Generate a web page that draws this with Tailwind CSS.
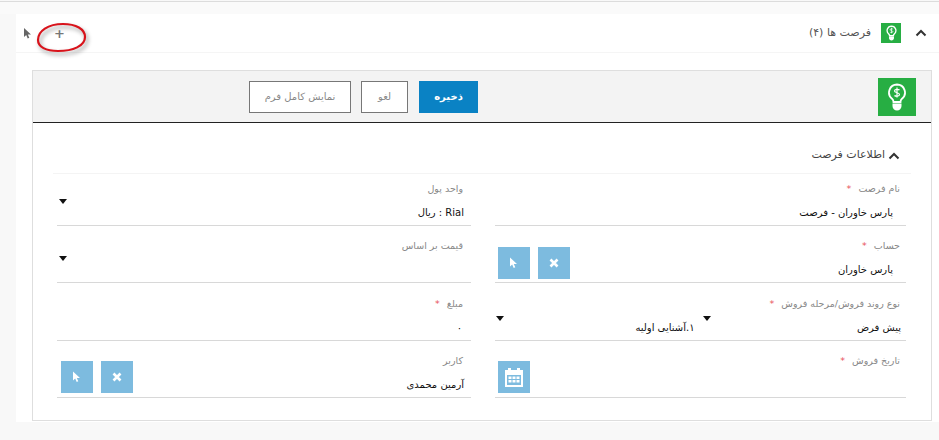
<!DOCTYPE html>
<html lang="fa" dir="rtl">
<head>
    <meta charset="UTF-8">
    <title>فرصت ها</title>
    <script src="https://cdn.jsdelivr.net/npm/@tailwindcss/browser@4"></script>
</head>
<body class="relative h-[440px] w-[939px] overflow-hidden bg-[#f8f8f8] font-['DejaVu_Sans',sans-serif]">

    <!-- top strip -->
    <div class="mt-px h-[13px] border-t border-[#dcdcdc] bg-[#fafafa]"></div>

    <div class="ml-[16px] h-[408px] bg-white">

        <!-- section header -->
        <div class="flex h-[39px] items-center justify-between border-b border-[#f5f5f5] pr-[12px] pl-[8px]">
            <div class="flex items-center">
                <svg class="ml-[14px] h-[10px] w-[12px]" viewBox="0 0 12 10"><path d="M1.500 7.500 6 3l4.500 4.500" fill="none" stroke="#333" stroke-width="2"/></svg>
                <span class="flex h-[20px] w-[20px] items-center justify-center bg-[#27ae43]">
                    <svg class="h-[16px] w-[11px]" viewBox="0 0 20 28"><path d="M10 1.500a8 8 0 0 0-5 14.200c1 1 1.500 2 1.500 3.300h7c0-1.300.5-2.300 1.500-3.300A8 8 0 0 0 10 1.500Z" fill="none" stroke="#fff" stroke-width="2.400"/><path d="M5.500 20.500h9V23c0 2.500-2 4.500-4.500 4.500S5.500 25.500 5.500 23Z" fill="#fff"/><path d="M12.500 7c-1-1-5-1-5 1s5 1.500 5 3.500-4 2-5 1M10 4.500v10" fill="none" stroke="#fff" stroke-width="1.300"/></svg>
                </span>
                <span class="mr-[10px] text-[11px] text-[#555]">فرصت ها (۴)</span>
            </div>
            <div class="flex items-center gap-[22px]">
                <span class="text-[13px] leading-none font-bold text-[#777]">+</span>
                <svg class="h-[11px] w-[8px]" viewBox="0 0 8 11"><path d="M0 0v9l2.200-2 1.500 3.500 1.600-.7-1.500-3.300H7Z" fill="#666"/></svg>
            </div>
        </div>

        <!-- form card -->
        <div class="mt-[17px] mr-[7px] ml-[16px] h-[351px] border border-[#dedede]">

            <!-- toolbar -->
            <div class="flex h-[52px] items-center border-b border-[#222] bg-[#f3f3f3] pr-[15px]">
                <span class="flex h-[38px] w-[38px] items-center justify-center bg-[#27ae43]">
                    <svg class="h-[28px] w-[20px]" viewBox="0 0 20 28"><path d="M10 1.500a8 8 0 0 0-5 14.200c1 1 1.500 2 1.500 3.300h7c0-1.300.5-2.300 1.500-3.300A8 8 0 0 0 10 1.500Z" fill="none" stroke="#fff" stroke-width="1.800"/><path d="M5.500 20.500h9V23c0 2.500-2 4.500-4.500 4.500S5.500 25.500 5.500 23Z" fill="#fff"/><path d="M12.500 7c-1-1-5-1-5 1s5 1.500 5 3.500-4 2-5 1M10 4.500v10" fill="none" stroke="#fff" stroke-width="1.200"/></svg>
                </span>
                <div class="mr-[400px] flex items-center gap-[10px]">
                    <button class="ml-px h-[32px] w-[59px] bg-[#0a82c4] text-[10px] font-bold text-white">ذخیره</button>
                    <button class="h-[32px] w-[47px] border border-[#777] bg-white text-[10px] text-[#888]">لغو</button>
                    <button class="h-[32px] w-[102px] border border-[#777] bg-white text-[10px] text-[#888]">نمایش کامل فرم</button>
                </div>
            </div>

            <!-- group title -->
            <div class="mx-[20px] flex h-[51px] items-center border-b border-[#f4f4f4] pt-[15px] pr-[11px]">
                <svg class="ml-[3px] h-[10px] w-[12px]" viewBox="0 0 12 10"><path d="M1.500 7.500 6 3l4.500 4.500" fill="none" stroke="#333" stroke-width="2"/></svg>
                <span class="text-[11px] text-[#444]">اطلاعات فرصت</span>
            </div>

            <!-- fields -->
            <div class="grid grid-cols-[411px_414px] grid-rows-[52px_57px_58px_57px] gap-x-[24px] pr-[25px]">

                <div class="flex flex-col justify-end border-b border-[#d8d8d8]">
                    <div class="pr-[6px] text-[9.500px] leading-[14px] text-[#888]">نام فرصت <span class="mr-[4px] text-[#e8505b]">*</span></div>
                    <div class="mt-[9px] mb-[4px] pr-[13px] text-[10px] leading-[16px] text-[#111]">پارس خاوران - فرصت</div>
                </div>

                <div class="flex items-end justify-between border-b border-[#d8d8d8]">
                    <div>
                        <div class="pr-[8px] text-[9.500px] leading-[14px] text-[#888]">واحد پول</div>
                        <div class="mt-[9px] mb-[4px] pr-[7px] text-[10px] leading-[16px] text-[#111]">Rial : ریال</div>
                    </div>
                    <svg class="mb-[21px] ml-[2px] h-[5px] w-[8px]" viewBox="0 0 8 5"><path d="M0 0h8L4 5Z" fill="#111"/></svg>
                </div>

                <div class="flex items-end justify-between border-b border-[#d8d8d8]">
                    <div>
                        <div class="pr-[6px] text-[9.500px] leading-[14px] text-[#888]">حساب <span class="mr-[4px] text-[#e8505b]">*</span></div>
                        <div class="mt-[9px] mb-[4px] pr-[13px] text-[10px] leading-[16px] text-[#111]">پارس خاوران</div>
                    </div>
                    <div class="mb-[3px] ml-[3px] flex gap-[8px]">
                        <span class="flex h-[32px] w-[32px] items-center justify-center bg-[#7dbbdf]">
                            <svg class="h-[10px] w-[10px]" viewBox="0 0 10 10"><path d="M1.500 1.500 8.500 8.500M8.500 1.500 1.500 8.500" stroke="#fff" stroke-width="2.600"/></svg>
                        </span>
                        <span class="flex h-[32px] w-[32px] items-center justify-center bg-[#7dbbdf]">
                            <svg class="h-[12px] w-[8px]" viewBox="0 0 8 11"><path d="M0 0v9l2.200-2 1.500 3.500 1.600-.7-1.500-3.300H7Z" fill="#fff"/></svg>
                        </span>
                    </div>
                </div>

                <div class="flex items-end justify-between border-b border-[#d8d8d8]">
                    <div>
                        <div class="pr-[8px] text-[9.500px] leading-[14px] text-[#888]">قیمت بر اساس</div>
                        <div class="mt-[9px] mb-[4px] h-[16px]"></div>
                    </div>
                    <svg class="mb-[21px] ml-[2px] h-[5px] w-[8px]" viewBox="0 0 8 5"><path d="M0 0h8L4 5Z" fill="#111"/></svg>
                </div>

                <div class="flex flex-col justify-end border-b border-[#d8d8d8]">
                    <div class="pr-[6px] text-[9.500px] leading-[14px] text-[#888]">نوع روند فروش/مرحله فروش <span class="mr-[4px] text-[#e8505b]">*</span></div>
                    <div class="mt-[9px] mb-[4px] grid grid-cols-2">
                        <div class="relative pr-[5px] text-[10px] leading-[16px] text-[#111]">پیش فرض
                            <svg class="absolute top-[-4px] left-[2px] h-[5px] w-[8px]" viewBox="0 0 8 5"><path d="M0 0h8L4 5Z" fill="#111"/></svg>
                        </div>
                        <div class="relative pr-[6px] text-[10px] leading-[16px] text-[#111]">۱.آشنایی اولیه
                            <svg class="absolute top-[-4px] left-[1px] h-[5px] w-[8px]" viewBox="0 0 8 5"><path d="M0 0h8L4 5Z" fill="#111"/></svg>
                        </div>
                    </div>
                </div>

                <div class="flex flex-col justify-end border-b border-[#d8d8d8]">
                    <div class="pr-[8px] text-[9.500px] leading-[14px] text-[#888]">مبلغ <span class="mr-[4px] text-[#e8505b]">*</span></div>
                    <div class="mt-[9px] mb-[4px] pr-[9px] text-[10px] leading-[16px] text-[#111]">۰</div>
                </div>

                <div class="flex items-end justify-between border-b border-[#d8d8d8]">
                    <div>
                        <div class="pr-[6px] text-[9.500px] leading-[14px] text-[#888]">تاریخ فروش <span class="mr-[4px] text-[#e8505b]">*</span></div>
                        <div class="mt-[9px] mb-[4px] h-[16px]"></div>
                    </div>
                    <span class="mb-[4px] ml-[3px] flex h-[32px] w-[32px] items-center justify-center bg-[#7dbbdf]">
                        <svg class="h-[22px] w-[22px]" viewBox="0 0 22 22"><path d="M2 4h3V2h3v2h6V2h3v2h3v17H2Zm2 5v10h14V9Z" fill="#fff" fill-rule="evenodd"/><path d="M5.500 10.500h3v2.500h-3Zm4 0h3v2.500h-3Zm4 0h3v2.500h-3Zm-8 3.500h3v2.500h-3Zm4 0h3v2.500h-3Zm4 0h3v2.500h-3Z" fill="#fff"/></svg>
                    </span>
                </div>

                <div class="flex items-end justify-between border-b border-[#d8d8d8]">
                    <div>
                        <div class="pr-[8px] text-[9.500px] leading-[14px] text-[#888]">کاربر</div>
                        <div class="mt-[9px] mb-[4px] pr-[7px] text-[10px] leading-[16px] text-[#111]">آرمین محمدی</div>
                    </div>
                    <div class="mb-[4px] ml-[4px] flex gap-[8px]">
                        <span class="flex h-[32px] w-[32px] items-center justify-center bg-[#7dbbdf]">
                            <svg class="h-[10px] w-[10px]" viewBox="0 0 10 10"><path d="M1.500 1.500 8.500 8.500M8.500 1.500 1.500 8.500" stroke="#fff" stroke-width="2.600"/></svg>
                        </span>
                        <span class="flex h-[32px] w-[32px] items-center justify-center bg-[#7dbbdf]">
                            <svg class="h-[12px] w-[8px]" viewBox="0 0 8 11"><path d="M0 0v9l2.200-2 1.500 3.500 1.600-.7-1.500-3.300H7Z" fill="#fff"/></svg>
                        </span>
                    </div>
                </div>
            </div>
        </div>
    </div>

    <!-- red hand-drawn annotation over the plus -->
    <svg class="absolute top-[20px] left-[32px] h-[36px] w-[58px] drop-shadow-[2px_3px_2px_rgba(0,0,0,0.4)]" viewBox="0 0 58 36"><path d="M6 20C6 11 16 4 31 4c13 0 22 5 22 13 0 9-12 14-27 14C14 31 6 27 6 20Z" fill="none" stroke="#d8131b" stroke-width="2.200"/></svg>

</body>
</html>
